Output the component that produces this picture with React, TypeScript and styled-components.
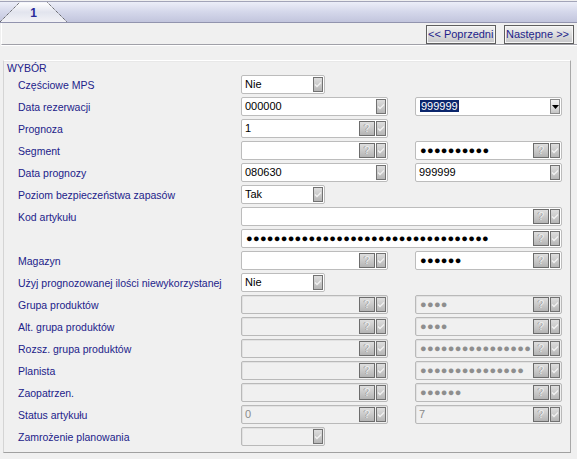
import React from 'react';
import styled, { createGlobalStyle } from 'styled-components';

const Global = createGlobalStyle`
  html, body { margin: 0; padding: 0; background: #f0f0f0; }
  body {
    font-family: "Liberation Sans", Arial, sans-serif;
    font-size: 10px;
    width: 577px;
    height: 459px;
    overflow: hidden;
  }
`;

const Page = styled.div`
  width: 577px;
  height: 459px;
  display: flex;
  flex-direction: column;
  background: #f0f0f0;
`;

const TabStrip = styled.div`
  height: 22px;
  display: flex;
  align-items: flex-end;
  border-bottom: 1px solid #9294ae;
  background: linear-gradient(
    to bottom,
    #f0f0f0 0px,
    #f0f0f0 1px,
    #a2a4b8 1px,
    #a2a4b8 2px,
    #eceef8 2px,
    #d4d7ea 12px,
    #c2c5dd 22px
  );
`;

const Tab = styled.div`
  position: relative;
  width: 67px;
  height: 20px;
  display: flex;
  align-items: center;
  justify-content: center;
`;

const TabShape = styled.svg`
  position: absolute;
  left: 0;
  top: 0;
`;

const TabLabel = styled.span`
  position: relative;
  font-family: "Liberation Sans", Arial, sans-serif;
  font-weight: bold;
  font-size: 12px;
  color: #2a2a9a;
  margin-top: 1px;
`;

const Toolbar = styled.div`
  height: 22px;
  display: flex;
  justify-content: flex-end;
  align-items: flex-start;
  gap: 8px;
  padding: 2px 3px 0 0;
  box-sizing: border-box;
  border-left: 1px solid #ffffff;
  margin-left: 1px;
  border-bottom: 1px solid #a0a0a8;
  box-shadow: 0 1px 0 #ffffff;
`;

const NavButton = styled.button`
  width: 70px;
  height: 19px;
  box-sizing: border-box;
  padding: 0 0 0 1px;
  margin: 0;
  border: 1px solid #5e5e5e;
  box-shadow: inset 0 0 0 1px #f6f6f6;
  background: linear-gradient(to bottom, #f2f2f2 0%, #dadada 55%, #c6c6ca 100%);
  color: #1e1e8a;
  font-family: "Liberation Sans", Arial, sans-serif;
  font-size: 11px;
  white-space: nowrap;
  overflow: hidden;
  text-align: left;
  line-height: 15px;
`;

const Content = styled.div`
  flex: 1;
  padding: 15px 6px 6px 3px;
  display: flex;
  box-sizing: border-box;
`;

const Frame = styled.div`
  flex: 1;
  border-top: 1px solid #ffffff;
  border-left: 1px solid #d4d4d4;
  border-right: 1px solid #a8a8a8;
  border-bottom: 1px solid #a0a0a0;
  box-shadow: inset 0 1px 0 #e8e8e8;
  display: flex;
  flex-direction: column;
  padding: 1px 0 0 3px;
`;

const Legend = styled.div`
  color: #22228a;
  font-size: 10.5px;
  line-height: 13px;
  height: 13px;
`;

const Rows = styled.div`
  display: flex;
  flex-direction: column;
  gap: 3px;
`;

const Row = styled.div`
  display: grid;
  grid-template-columns: 223px 147px 27px 147px;
  height: 19px;
  align-items: center;
  padding-left: 11px;
`;

const Label = styled.span`
  color: #22228a;
  font-size: 10.5px;
  white-space: nowrap;
`;

const Cell = styled.div<{ $span?: boolean; $col?: number }>`
  grid-column: ${(p) => (p.$span ? '2 / 5' : p.$col === 2 ? '4' : '2')};
  display: flex;
`;

const Box = styled.div<{ $disabled?: boolean; $w?: number }>`
  width: ${(p) => (p.$w ? `${p.$w}px` : '100%')};
  height: 19px;
  box-sizing: border-box;
  display: flex;
  align-items: center;
  gap: 1px;
  padding-right: 1px;
  border: 1px solid ${(p) => (p.$disabled ? '#b9b9b9' : '#bcbcbc')};
  border-radius: 2px;
  background: ${(p) => (p.$disabled ? '#f0f0f0' : '#ffffff')};
  box-shadow: ${(p) => (p.$disabled ? 'inset 1px 1px 0 #e2e2e2' : 'none')};
`;

const Value = styled.span<{ $disabled?: boolean }>`
  flex: 1;
  min-width: 0;
  padding-left: 3px;
  font-family: "Liberation Sans", Arial, sans-serif;
  font-size: 11px;
  line-height: 15px;
  color: ${(p) => (p.$disabled ? '#8a8a8a' : '#000000')};
  white-space: nowrap;
  overflow: hidden;
`;

const DotText = styled(Value)`
  font-size: 11px;
  letter-spacing: 0.3px;
  padding-left: 4px;
  color: ${(p) => (p.$disabled ? '#8e8e8e' : '#000000')};
`;

const Selected = styled.span`
  background: #0b266c;
  color: #ffffff;
  padding: 0 1px 0 1px;
  margin-left: 1px;
`;

const QButton = styled.span`
  width: 16px;
  height: 15px;
  box-sizing: border-box;
  border: 1px solid #6c6c6c;
  background: linear-gradient(to bottom, #dedede 0%, #cacaca 50%, #b4b4b4 100%);
  display: flex;
  align-items: center;
  justify-content: center;
  font-family: "Liberation Sans", Arial, sans-serif;
  font-size: 11px;
  color: #eeeeee;
  text-shadow: -1px 0 0 #9a9a9a;
  line-height: 13px;
`;

const DropButton = styled.span<{ $active?: boolean }>`
  width: 10px;
  height: 15px;
  box-sizing: border-box;
  border: 1px solid ${(p) => (p.$active ? '#8a8a8a' : '#727272')};
  background: ${(p) =>
    p.$active
      ? 'linear-gradient(to bottom, #f4f4f4 0%, #dcdcdc 60%, #c4c4c4 100%)'
      : 'linear-gradient(to bottom, #dedede 0%, #cacaca 50%, #b6b6b6 100%)'};
  display: flex;
  align-items: center;
  justify-content: center;
`;

const Check = () => (
  <svg width="8" height="7" viewBox="0 0 8 7">
    <polyline points="1,3.5 3,5.5 7,1.5" fill="none" stroke="#f2f2f2" strokeWidth="1.3" />
  </svg>
);

const Arrow = () => (
  <svg width="7" height="4" viewBox="0 0 7 4">
    <polygon points="0,0 7,0 3.5,4" fill="#000000" />
  </svg>
);

type FieldProps = {
  value?: string;
  dots?: number;
  q?: boolean;
  disabled?: boolean;
  selected?: boolean;
  w?: number;
};

const Field = ({ value, dots, q, disabled, selected, w }: FieldProps) => (
  <Box $disabled={disabled} $w={w}>
    {dots ? (
      <DotText $disabled={disabled}>{'●'.repeat(dots)}</DotText>
    ) : (
      <Value $disabled={disabled}>
        {selected ? <Selected>{value}</Selected> : value}
      </Value>
    )}
    {q && <QButton>?</QButton>}
    <DropButton $active={selected}>{selected ? <Arrow /> : <Check />}</DropButton>
  </Box>
);

type RowDef = {
  label?: string;
  a?: FieldProps;
  b?: FieldProps;
  span?: FieldProps;
};

const rows: RowDef[] = [
  { label: 'Częściowe MPS', a: { value: 'Nie', w: 84 } },
  { label: 'Data rezerwacji', a: { value: '000000' }, b: { value: '999999', selected: true } },
  { label: 'Prognoza', a: { value: '1', q: true } },
  { label: 'Segment', a: { q: true }, b: { dots: 10, q: true } },
  { label: 'Data prognozy', a: { value: '080630' }, b: { value: '999999' } },
  { label: 'Poziom bezpieczeństwa zapasów', a: { value: 'Tak', w: 84 } },
  { label: 'Kod artykułu', span: { q: true } },
  { span: { dots: 35, q: true } },
  { label: 'Magazyn', a: { q: true }, b: { dots: 6, q: true } },
  { label: 'Użyj prognozowanej ilości niewykorzystanej', a: { value: 'Nie', w: 84 } },
  { label: 'Grupa produktów', a: { q: true, disabled: true }, b: { dots: 4, q: true, disabled: true } },
  { label: 'Alt. grupa produktów', a: { q: true, disabled: true }, b: { dots: 4, q: true, disabled: true } },
  { label: 'Rozsz. grupa produktów', a: { q: true, disabled: true }, b: { dots: 16, q: true, disabled: true } },
  { label: 'Planista', a: { q: true, disabled: true }, b: { dots: 15, q: true, disabled: true } },
  { label: 'Zaopatrzen.', a: { q: true, disabled: true }, b: { dots: 6, q: true, disabled: true } },
  { label: 'Status artykułu', a: { value: '0', q: true, disabled: true }, b: { value: '7', q: true, disabled: true } },
  { label: 'Zamrożenie planowania', a: { disabled: true, w: 84 } },
];

export default function App() {
  return (
    <Page>
      <Global />
      <TabStrip>
        <Tab>
          <TabShape width="67" height="20" viewBox="0 0 67 20">
            <defs>
              <linearGradient id="tabg" x1="0" y1="0" x2="0" y2="1">
                <stop offset="0" stopColor="#ffffff" />
                <stop offset="0.5" stopColor="#e2e4ee" />
                <stop offset="1" stopColor="#f2f2f6" />
              </linearGradient>
            </defs>
            <polygon points="0,20 19.5,0.5 47.5,0.5 67,20" fill="url(#tabg)" />
            <line x1="0" y1="20" x2="19.5" y2="0.5" stroke="#3a3a3a" strokeWidth="1" strokeDasharray="1 1" />
            <line x1="47.5" y1="0.5" x2="67" y2="20" stroke="#3a3a3a" strokeWidth="1" strokeDasharray="1 1" />
          </TabShape>
          <TabLabel>1</TabLabel>
        </Tab>
      </TabStrip>
      <Toolbar>
        <NavButton>&lt;&lt; Poprzedni</NavButton>
        <NavButton>Następne &gt;&gt;</NavButton>
      </Toolbar>
      <Content>
        <Frame>
          <Legend>WYBÓR</Legend>
          <Rows>
            {rows.map((r, i) => (
              <Row key={i}>
                <Label>{r.label ?? ''}</Label>
                {r.span && (
                  <Cell $span>
                    <Field {...r.span} />
                  </Cell>
                )}
                {r.a && (
                  <Cell>
                    <Field {...r.a} />
                  </Cell>
                )}
                {r.b && (
                  <Cell $col={2}>
                    <Field {...r.b} />
                  </Cell>
                )}
              </Row>
            ))}
          </Rows>
        </Frame>
      </Content>
    </Page>
  );
}
